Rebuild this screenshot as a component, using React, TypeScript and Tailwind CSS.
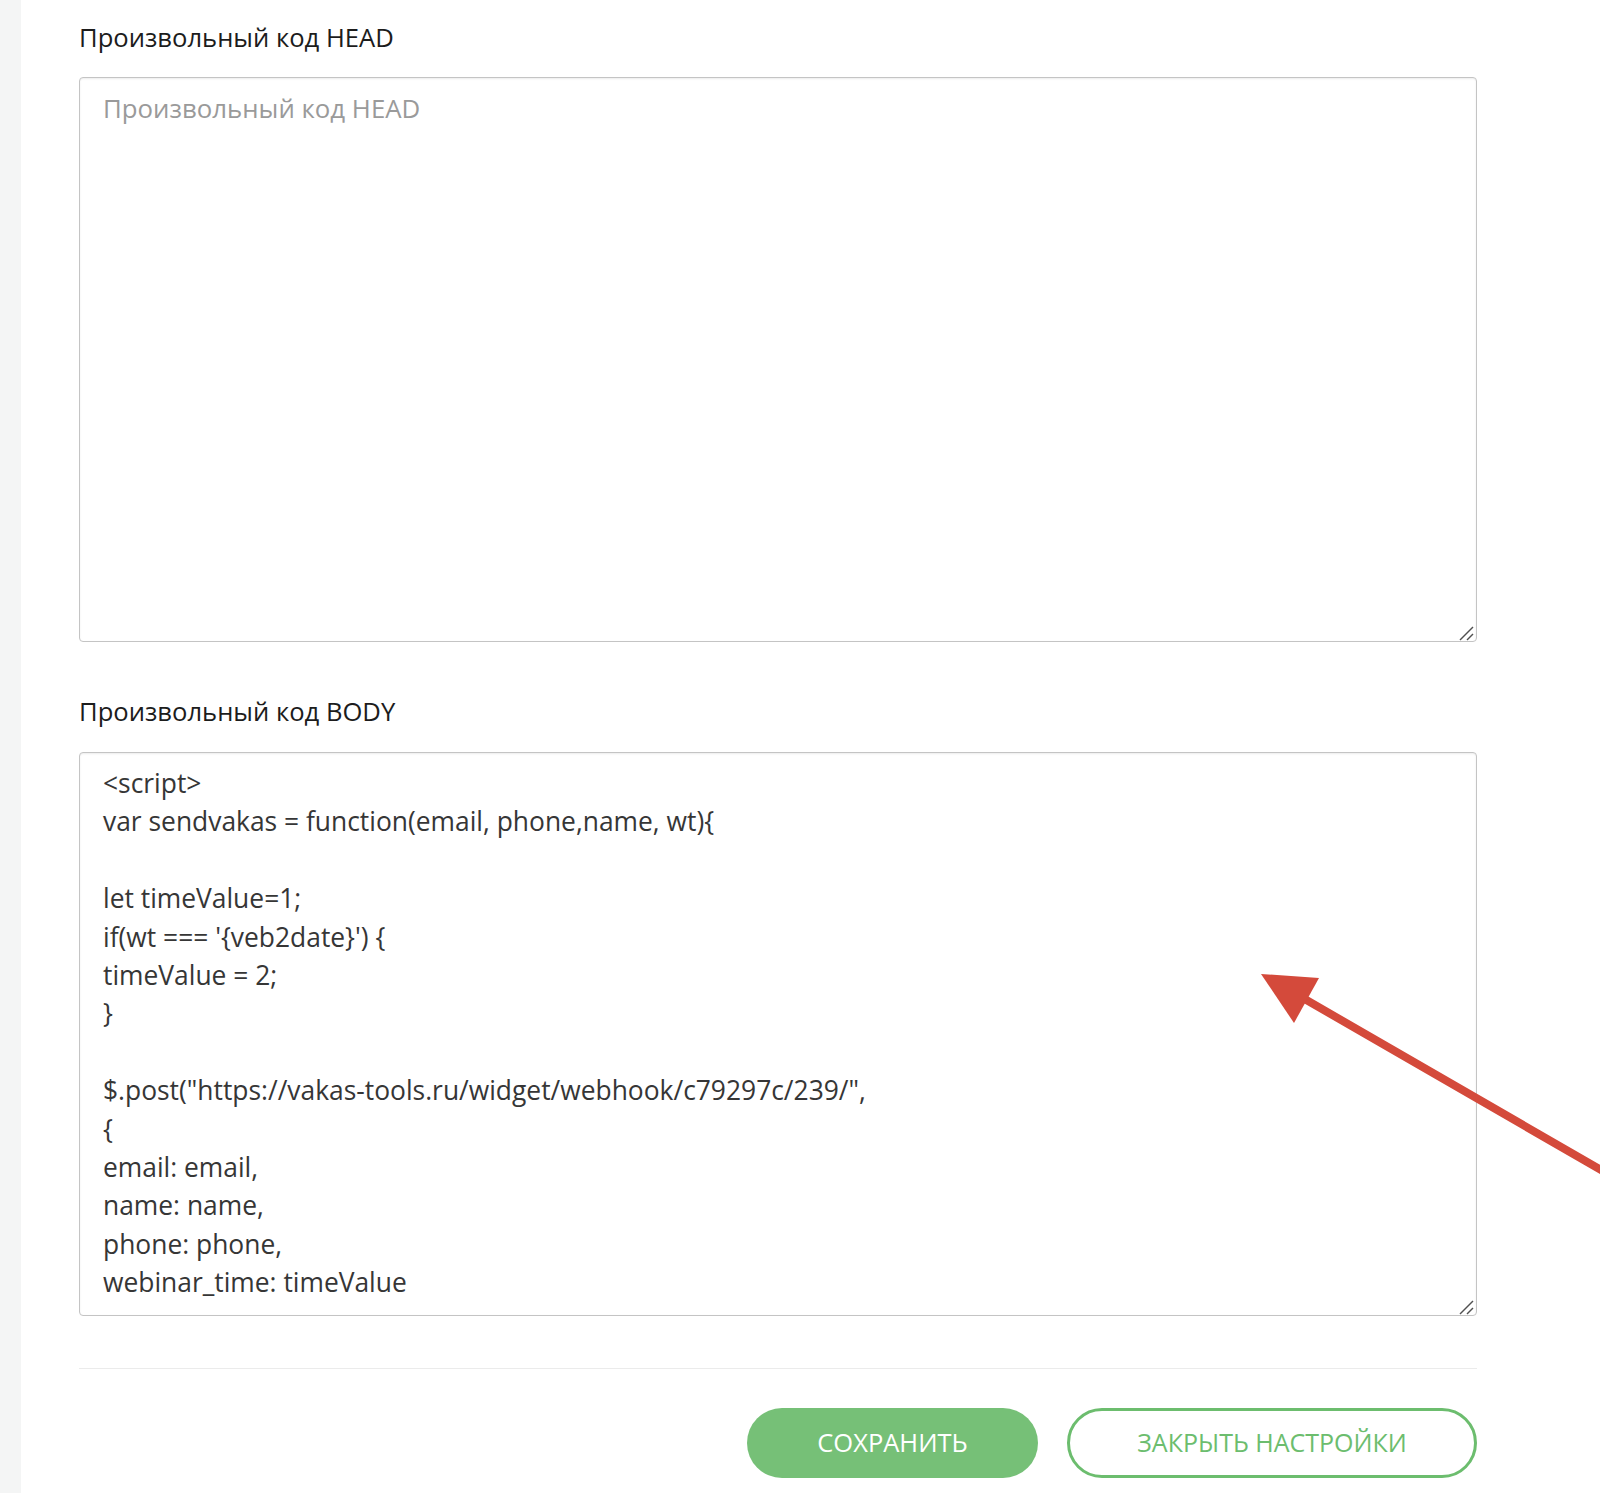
import React from "react";

const code = `<script>
var sendvakas = function(email, phone,name, wt){

let timeValue=1;
if(wt === '{veb2date}') {
timeValue = 2;
}

$.post("https://vakas-tools.ru/widget/webhook/c79297c/239/",
{
email: email,
name: name,
phone: phone,
webinar_time: timeValue`;

const font = { fontFamily: "'Open Sans', 'Noto Sans', sans-serif" };

function Handle() {
  return (
    <svg className="pointer-events-none absolute bottom-0 right-0" width="20" height="20" viewBox="0 0 20 20">
      <line x1="3" y1="18" x2="16" y2="5" stroke="#505050" strokeWidth="1.4" />
      <line x1="10" y1="18" x2="16" y2="12" stroke="#505050" strokeWidth="1.4" />
    </svg>
  );
}

export default function App() {
  return (
    <div className="relative flex min-h-[1493px] w-[1600px] bg-white overflow-hidden" style={font}>
      <div className="w-[21px] shrink-0 bg-[#f4f5f5]" />
      <div className="flex w-[1398px] flex-col pl-[58px] box-content">
        <label className="mt-[22px] block h-[32px] text-[25.6px] leading-[32px] text-[#1c1c1c]">
          Произвольный код HEAD
        </label>
        <div className="relative mt-[23px] h-[565px] w-full">
          <textarea
            className="block h-full w-full resize-none rounded-[4px] border border-[#c4c4c4] bg-white px-[23px] py-[11px] text-[25.8px] leading-[38.4px] text-[#3a3a3a] placeholder:text-[#9a9a9a] shadow-[inset_0_1px_2px_rgba(0,0,0,0.08)] outline-none"
            placeholder="Произвольный код HEAD"
            style={font}
            readOnly
          />
          <Handle />
        </div>
        <label className="mt-[54px] block h-[32px] text-[25.6px] leading-[32px] text-[#1c1c1c]">
          Произвольный код BODY
        </label>
        <div className="relative mt-[24px] h-[564px] w-full">
          <textarea
            className="block h-full w-full resize-none rounded-[4px] border border-[#c4c4c4] bg-white px-[23px] py-[11px] text-[26.4px] leading-[38.4px] text-[#363636] shadow-[inset_0_1px_2px_rgba(0,0,0,0.08)] outline-none overflow-hidden"
            style={font}
            value={code}
            readOnly
          />
          <Handle />
        </div>
        <div className="mt-[52px] h-px w-full bg-[#ebebeb]" />
        <div className="mt-[39px] flex justify-end gap-[29px]">
          <button className="flex h-[70px] w-[291px] items-center justify-center rounded-full bg-[#76c077] pb-[1px] text-[25.5px] uppercase text-white">
            Сохранить
          </button>
          <button className="flex h-[70px] w-[410px] items-center justify-center rounded-full border-[3px] border-[#6cbd6e] bg-white pb-[1px] text-[25px] uppercase text-[#6cbd6e]">
            Закрыть настройки
          </button>
        </div>
      </div>
      <svg className="pointer-events-none absolute left-0 top-0" width="1600" height="1493" viewBox="0 0 1600 1493">
        <line x1="1296" y1="994" x2="1608" y2="1174" stroke="#d44a3b" strokeWidth="8" strokeLinecap="round" />
        <polygon points="1261,974 1319,978 1294,1023" fill="#d44a3b" />
      </svg>
    </div>
  );
}
